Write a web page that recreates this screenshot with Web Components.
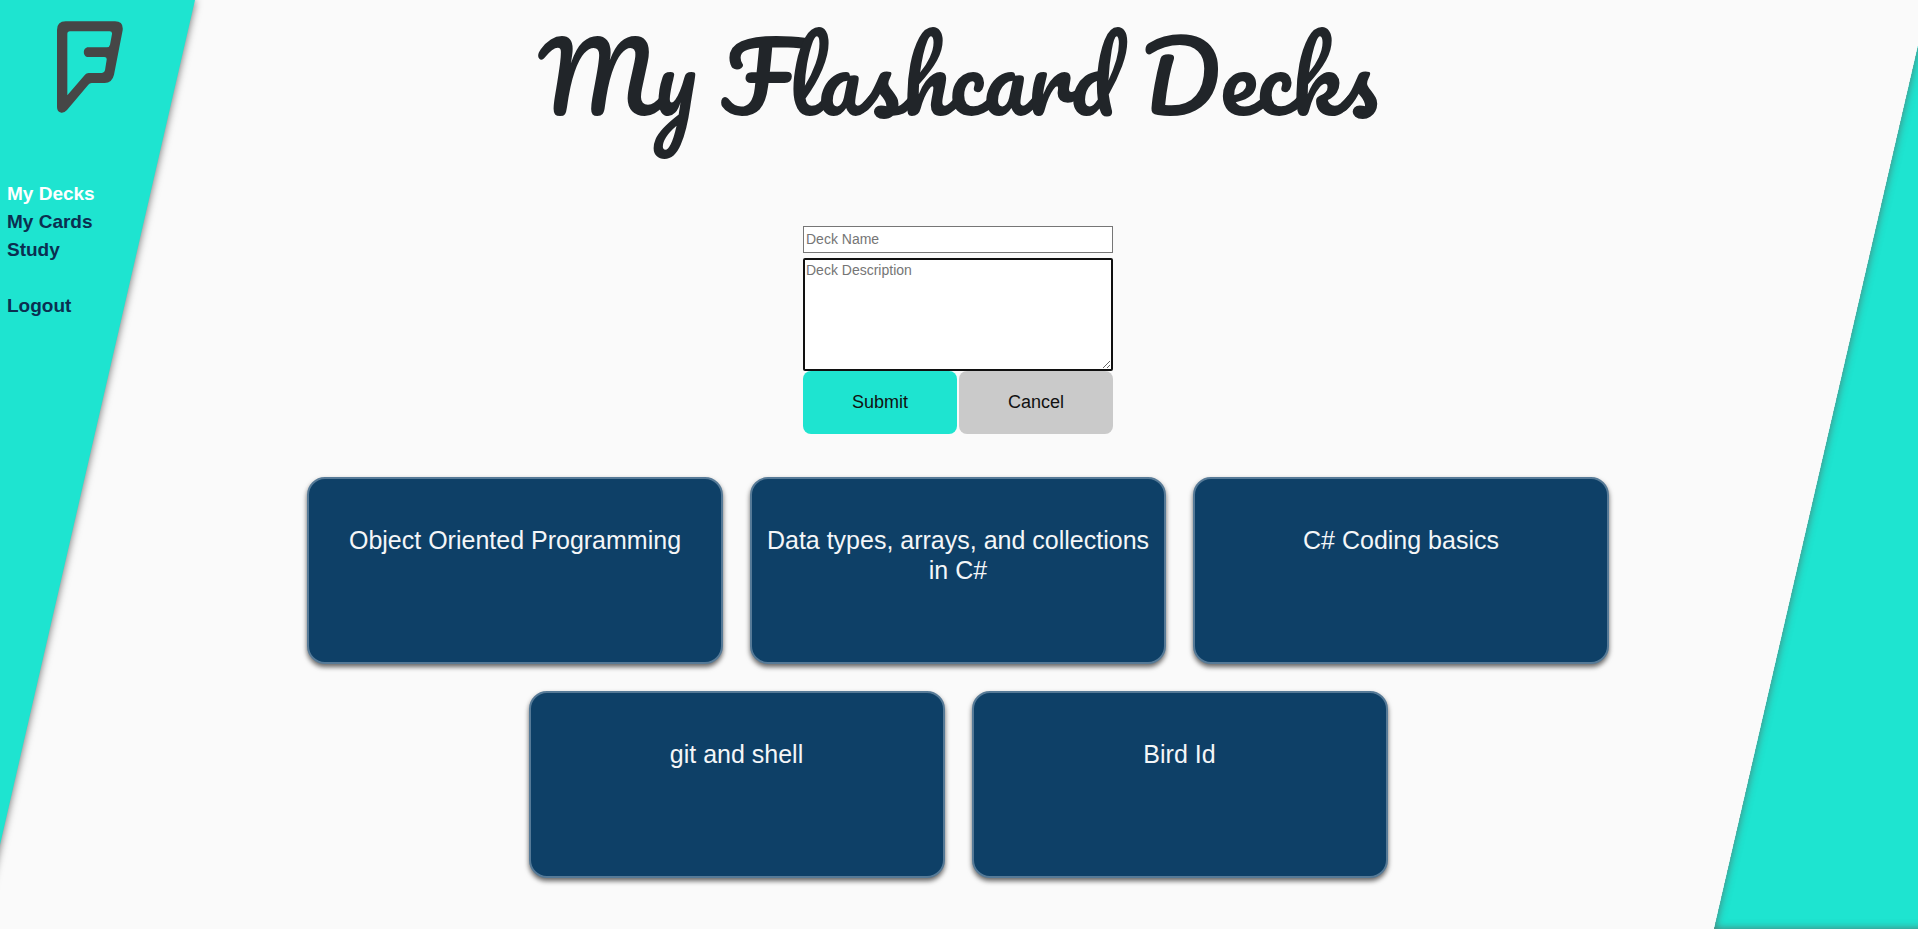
<!DOCTYPE html>
<html lang="en">
<head>
<meta charset="utf-8">
<title>My Flashcard Decks</title>
<style>
  html, body { margin: 0; height: 100%; }
  body {
    background: #fafafa;
    color: #212529;
    font-family: "Liberation Sans", Arial, sans-serif;
    --teal: #1ee4d0;
    --navy: #0e4067;
  }
</style>
</head>
<body>
<flash-app>
  <side-nav slot="nav"></side-nav>
  <page-title>My Flashcard Decks</page-title>
  <deck-form></deck-form>
  <deck-list>
    <deck-card>Object Oriented Programming</deck-card>
    <deck-card>Data types, arrays, and collections in C#</deck-card>
    <deck-card>C# Coding basics</deck-card>
    <deck-card>git and shell</deck-card>
    <deck-card>Bird Id</deck-card>
  </deck-list>
</flash-app>
<script>
const define = (name, html) => customElements.define(name, class extends HTMLElement {
  constructor() {
    super();
    this.attachShadow({ mode: "open" }).innerHTML = html;
  }
});

/* Slanted colour bands behind the page */
define("slant-bands", `
  <style>
    :host { position: absolute; inset: 0; overflow: hidden; z-index: -1; }
    div { position: absolute; top: 0; bottom: 0; width: 600px; background: var(--teal); transform: skewX(-13deg); }
    .left { left: -405px; transform-origin: top left; box-shadow: 0 0 8px rgba(0, 0, 0, .6); }
    .right { left: calc(100% - 204px); transform-origin: bottom left; box-shadow: inset 0 0 8px rgba(100, 70, 70, .7); }
  </style>
  <div class="left"></div><div class="right"></div>`);

define("flash-logo", `
  <style>
    :host { display: block; }
    svg { display: block; width: 66px; height: 92px; }
  </style>
  <svg viewBox="171 63 198 276" role="img" aria-label="Logo">
    <path fill="#464646" fill-rule="evenodd" d="M171 90Q171 64 197 64H345Q371 64 368 91L342 224Q336 249 314 249H275Q269 249 265 254L201 330Q193 339 184 338Q171 336 171 321ZM202 102Q202 94 210 94H329Q337 94 336 102L330 134Q328 142 321 142H265C247 142 247 171 265 171H313Q321 171 320 179L315 211Q313 219 306 219H266Q259 219 255 224L202 286Z"/>
  </svg>`);

define("side-nav", `
  <style>
    :host { display: block; }
    flash-logo { margin: 21px 0 67px 57px; }
    nav { display: flex; flex-direction: column; align-items: flex-start; padding-left: 7px; }
    a { color: #0b2f50; font-size: 19px; line-height: 28px; font-weight: bold; text-decoration: none; }
    a[aria-current] { color: #fff; }
    a:last-child { margin-top: 28px; }
  </style>
  <flash-logo></flash-logo>
  <nav>
    <a href="#decks" aria-current="page">My Decks</a>
    <a href="#cards">My Cards</a>
    <a href="#study">Study</a>
    <a href="#logout">Logout</a>
  </nav>`);

define("page-title", `
  <style>
    :host { display: block; }
    h1 { margin: 0; font: 500 94px/154px Pacifico, Lato, cursive; text-align: center; }
  </style>
  <h1><slot></slot></h1>`);

customElements.define("deck-form", class extends HTMLElement {
  constructor() {
    super();
    this.attachShadow({ mode: "open" }).innerHTML = `
      <style>
        :host { display: block; width: 310px; max-width: 100%; }
        form { display: grid; grid-template-columns: 1fr 1fr; column-gap: 2px; }
        input, textarea { grid-column: 1 / -1; box-sizing: border-box; width: 100%; margin: 0; border: 1px solid #767676; border-radius: 0; background: #fff; font: 14px/18px "Liberation Sans", Arial, sans-serif; }
        input { height: 27px; padding: 2px 2px 4px; margin-bottom: 5px; }
        textarea { height: 113px; padding: 2px; }
        textarea:focus { border: 2px solid #101010; border-radius: 2px; padding: 1px; outline: none; }
        ::placeholder { color: #757575; opacity: 1; }
        button { height: 63px; border: 0; border-radius: 8px; background: #cacaca; color: #111; font: 18px "Liberation Sans", Arial, sans-serif; }
        button[type=submit] { background: var(--teal); }
      </style>
      <form>
        <input type="text" placeholder="Deck Name" aria-label="Deck Name">
        <textarea placeholder="Deck Description" aria-label="Deck Description"></textarea>
        <button type="submit">Submit</button>
        <button type="button">Cancel</button>
      </form>`;
  }
  connectedCallback() {
    this.shadowRoot.querySelector("textarea").focus();
  }
});

define("deck-list", `
  <style>
    :host { display: flex; flex-wrap: wrap; justify-content: center; gap: 27px; width: 100%; max-width: 1304px; }
  </style>
  <slot></slot>`);

define("deck-card", `
  <style>
    :host {
      display: block; box-sizing: border-box; flex: 0 1 416px; min-height: 187px; padding: 46px 8px 8px;
      border: 2px solid #567a97; border-radius: 18px; background: var(--navy);
      box-shadow: 0 3px 5px rgba(0, 0, 0, .6);
    }
    h2 { margin: 0; color: #f4f6f8; font-size: 25px; line-height: 30px; font-weight: normal; text-align: center; }
  </style>
  <h2><slot></slot></h2>`);

define("flash-app", `
  <style>
    :host { display: grid; position: relative; z-index: 0; grid-template-columns: 200px minmax(0, 1fr) 202px; min-height: 100%; }
    main { display: flex; flex-direction: column; align-items: center; }
    ::slotted(page-title) { margin-bottom: 72px; }
    ::slotted(deck-form) { margin-bottom: 43px; }
    ::slotted(deck-list) { margin-bottom: 40px; }
  </style>
  <slant-bands></slant-bands>
  <slot name="nav"></slot>
  <main><slot></slot></main>`);
</script>
</body>
</html>
